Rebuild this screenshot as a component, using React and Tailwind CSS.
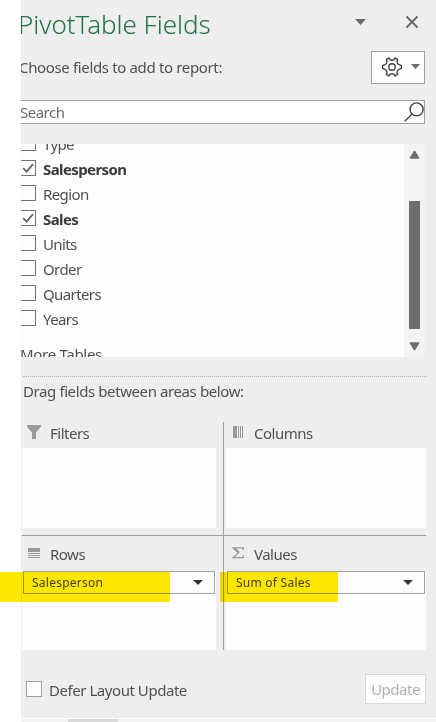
import { X } from 'lucide-react';

const fields = [
  { name: 'Type', checked: false },
  { name: 'Salesperson', checked: true },
  { name: 'Region', checked: false },
  { name: 'Sales', checked: true },
  { name: 'Units', checked: false },
  { name: 'Order', checked: false },
  { name: 'Quarters', checked: false },
  { name: 'Years', checked: false },
];

function Caret({ className }) {
  return (
    <svg viewBox="0 0 11 6" preserveAspectRatio="none" className={className}>
      <path d="M0 0h11L5.5 6z" fill="currentColor" />
    </svg>
  );
}

function ScrollArrow({ className }) {
  return (
    <svg viewBox="0 0 11 9" className={className}>
      <path d="M1.5 8h8L5.5 1.5z" fill="currentColor" stroke="currentColor" strokeWidth="1.6" strokeLinejoin="round" />
    </svg>
  );
}

function GearIcon() {
  return (
    <svg viewBox="0 0 20 20" className="w-5 h-5 text-[#444]" fill="none" stroke="currentColor" strokeWidth="1.4" strokeLinejoin="round">
      <path d="M5.2 1.8 6.8 1 8.2 2.8Q10 3.8 11.8 2.8L13.2 1 14.8 1.8 15.6 2.5 15 4.8Q15.2 7 17.2 7.7L19.4 8.6V11.4L17.2 12.3Q15.2 13 15 15.2L15.6 17.5 13.2 19 11.8 17.2Q10 16.2 8.2 17.2L6.8 19 4.4 17.5 5 15.2Q4.8 13 2.8 12.3L.6 11.4V8.6L2.8 7.7Q4.8 7 5 4.8L4.4 2.5Z" />
      <circle cx="10" cy="10" r="3.2" />
    </svg>
  );
}

function SearchIcon() {
  return (
    <svg viewBox="0 0 20 20" className="w-5 h-5 text-[#444]" fill="none" stroke="currentColor" strokeWidth="1.4">
      <circle cx="12.6" cy="7.4" r="6.5" />
      <path d="M8.1 12 .7 19.2" />
    </svg>
  );
}

function FilterIcon() {
  return (
    <svg viewBox="0 0 14 14" className="w-3.5 h-3.5" fill="currentColor">
      <path d="M0 0h14v1.8L9 7.6V14H5V7.6L0 1.8z" />
    </svg>
  );
}

function ColumnsIcon() {
  return (
    <svg viewBox="0 0 14 14" className="w-3.5 h-3.5" fill="currentColor">
      <path d="M2 1h4v12H2zM7 1h1v12H7zM9 1h1v12H9zM11 1h1v12h-1z" />
    </svg>
  );
}

function RowsIcon() {
  return (
    <svg viewBox="0 0 14 14" className="w-3.5 h-3.5" fill="currentColor">
      <path d="M1 2h12v4H1zM1 7h12v1H1zM1 9h12v1H1zM1 11h12v1H1z" />
    </svg>
  );
}

function SigmaIcon() {
  return (
    <svg viewBox="0 0 14 14" className="w-3.5 h-3.5" fill="none" stroke="currentColor" strokeWidth="1.3">
      <path d="M12.3 4V1.8H2.2L7.8 6.4 2.2 11.6H12.3V9.3" />
      <path d="M2.6 1.8 7.8 6.4" strokeWidth="2.2" />
    </svg>
  );
}

function Field({ name, checked }) {
  return (
    <div className="flex h-[25px] items-center">
      <div className="-ml-px -mt-[3px] h-4 w-4 shrink-0 border border-[#737373]">
        {checked && (
          <svg viewBox="0 0 14 14" className="h-3.5 w-3.5" fill="none" stroke="#666" strokeWidth="1.8">
            <path d="M2.2 7.2 5.6 10.6 12 3.2" />
          </svg>
        )}
      </div>
      <span className={checked ? 'ml-[7px] text-[15px] font-bold tracking-[-0.6px] text-[#3b3b3b]' : 'ml-[7px] text-[15px] tracking-[-0.6px]'}>
        {name}
      </span>
    </div>
  );
}

function Area({ icon, label, item, className }) {
  return (
    <div className={`flex flex-col ${className}`}>
      <div className="flex items-start gap-[9px] pl-[5px] pt-[3px] text-[#999]">
        {icon}
        <span className="-mt-px text-[15px] leading-[18px] tracking-[-0.5px] text-[#505050]">{label}</span>
      </div>
      <div className={item ? 'mt-auto h-[79px] bg-[#fdfdfd]' : 'mb-[7px] mt-auto h-20 bg-[#fdfdfd]'}>
        {item && (
          <div className="mx-px flex h-[23px] items-center justify-between border border-[#a0a0a0] pl-2 pr-[11px]">
            <span className="mt-px text-[12px] tracking-[0.25px] text-[#444]">{item}</span>
            <Caret className="h-[5px] w-[10px] text-[#333]" />
          </div>
        )}
      </div>
    </div>
  );
}

export default function App() {
  return (
    <div className="relative h-[722px] w-[436px] overflow-hidden bg-white font-['Noto_Sans',sans-serif] text-[#505050]">
      <div className="ml-[21px] flex h-[718px] flex-col overflow-hidden bg-[#eee]">
        <div className="flex h-[51px] items-center justify-between pr-[14px]">
          <h1 className="-ml-[3px] -mt-[2px] whitespace-nowrap text-[26px] font-light tracking-[-0.05px] text-[#217346]">PivotTable Fields</h1>
          <div className="-mt-[7px] flex items-center gap-9 text-[#6b6b6b]">
            <Caret className="h-1.5 w-[11px]" />
            <X className="h-5 w-5" strokeWidth={2.3} />
          </div>
        </div>

        <div className="flex h-[33px] items-center justify-between pr-[11px]">
          <span className="-ml-[2px] text-[15px] tracking-[-0.35px]">Choose fields to add to report:</span>
          <button className="flex h-[33px] w-[54px] items-center justify-between border border-[#a0a0a0] bg-[#fdfdfd] pb-0.5 pl-2.5 pr-1">
            <GearIcon />
            <Caret className="h-[5px] w-[9px] text-[#6b6b6b]" />
          </button>
        </div>

        <div className="-ml-px mr-[11px] mt-4 flex h-6 items-center justify-between border border-[#a0a0a0] bg-white">
          <span className="-ml-px text-[15px] tracking-[-0.5px] text-[#6b6b6b]">Search</span>
          <SearchIcon />
        </div>

        <div className="mr-[11px] mt-5 flex h-[213px] overflow-hidden">
          <div className="-mt-[12px] w-[383px] bg-[#fdfdfd]">
            {fields.map((field) => (
              <Field key={field.name} name={field.name} checked={field.checked} />
            ))}
            <div className="-ml-px mt-3 text-[15px] leading-5 tracking-[-0.3px]">More Tables</div>
          </div>
          <div className="flex w-[21px] flex-col items-center bg-[#f3f3f3] pb-1.5 pt-1.5 text-[#6e6e6e]">
            <ScrollArrow className="h-[9px] w-[11px]" />
            <div className="mt-[42px] h-32 w-[11px] bg-[#6e6e6e]" />
            <ScrollArrow className="mt-auto h-[9px] w-[11px] rotate-180" />
          </div>
        </div>

        <div className="ml-0.5 mr-[9px] mt-[19px] border-t border-dotted border-[#b5b5b5]" />
        <div className="ml-0.5 mt-1 text-[15px] leading-5 tracking-[-0.4px]">Drag fields between areas below:</div>

        <div className="ml-px mr-2.5 mt-[21px] grid h-[228px] grid-cols-[202px_202px] grid-rows-[114px_114px]">
          <Area className="border-b border-r border-[#a0a0a0] pr-[7px]" icon={<FilterIcon />} label="Filters" />
          <Area className="border-b border-[#a0a0a0] pl-0.5" icon={<ColumnsIcon />} label="Columns" />
          <Area className="border-r border-[#a0a0a0] pr-[7px] pt-[7px]" icon={<RowsIcon />} label="Rows" item="Salesperson" />
          <Area className="pl-0.5 pt-[7px]" icon={<SigmaIcon />} label="Values" item="Sum of Sales" />
        </div>

        <div className="ml-[5px] mr-[10px] mt-6 flex h-[30px] items-center">
          <div className="h-4 w-4 border border-[#a0a0a0] bg-[#fdfdfd]" />
          <span className="ml-[7px] mt-0.5 text-[15px] tracking-[-0.45px]">Defer Layout Update</span>
          <button className="ml-auto h-[30px] w-[61px] border border-[#d8d8d8] bg-[#fdfdfd] text-[15px] tracking-[-0.5px] text-[#b1b1b1]">Update</button>
        </div>
      </div>
      <div className="ml-[21px] h-1 border-t border-white bg-[#f3f3f3]">
        <div className="ml-[47px] h-full w-[50px] bg-[#dadada]" />
      </div>

      {/* highlighter marks */}
      <div className="absolute left-0 top-[572px] h-[30px] w-[170px] bg-[#ffe800] mix-blend-multiply" />
      <div className="absolute left-[220px] top-[572px] h-[30px] w-[118px] bg-[#ffe800] mix-blend-multiply" />
    </div>
  );
}
